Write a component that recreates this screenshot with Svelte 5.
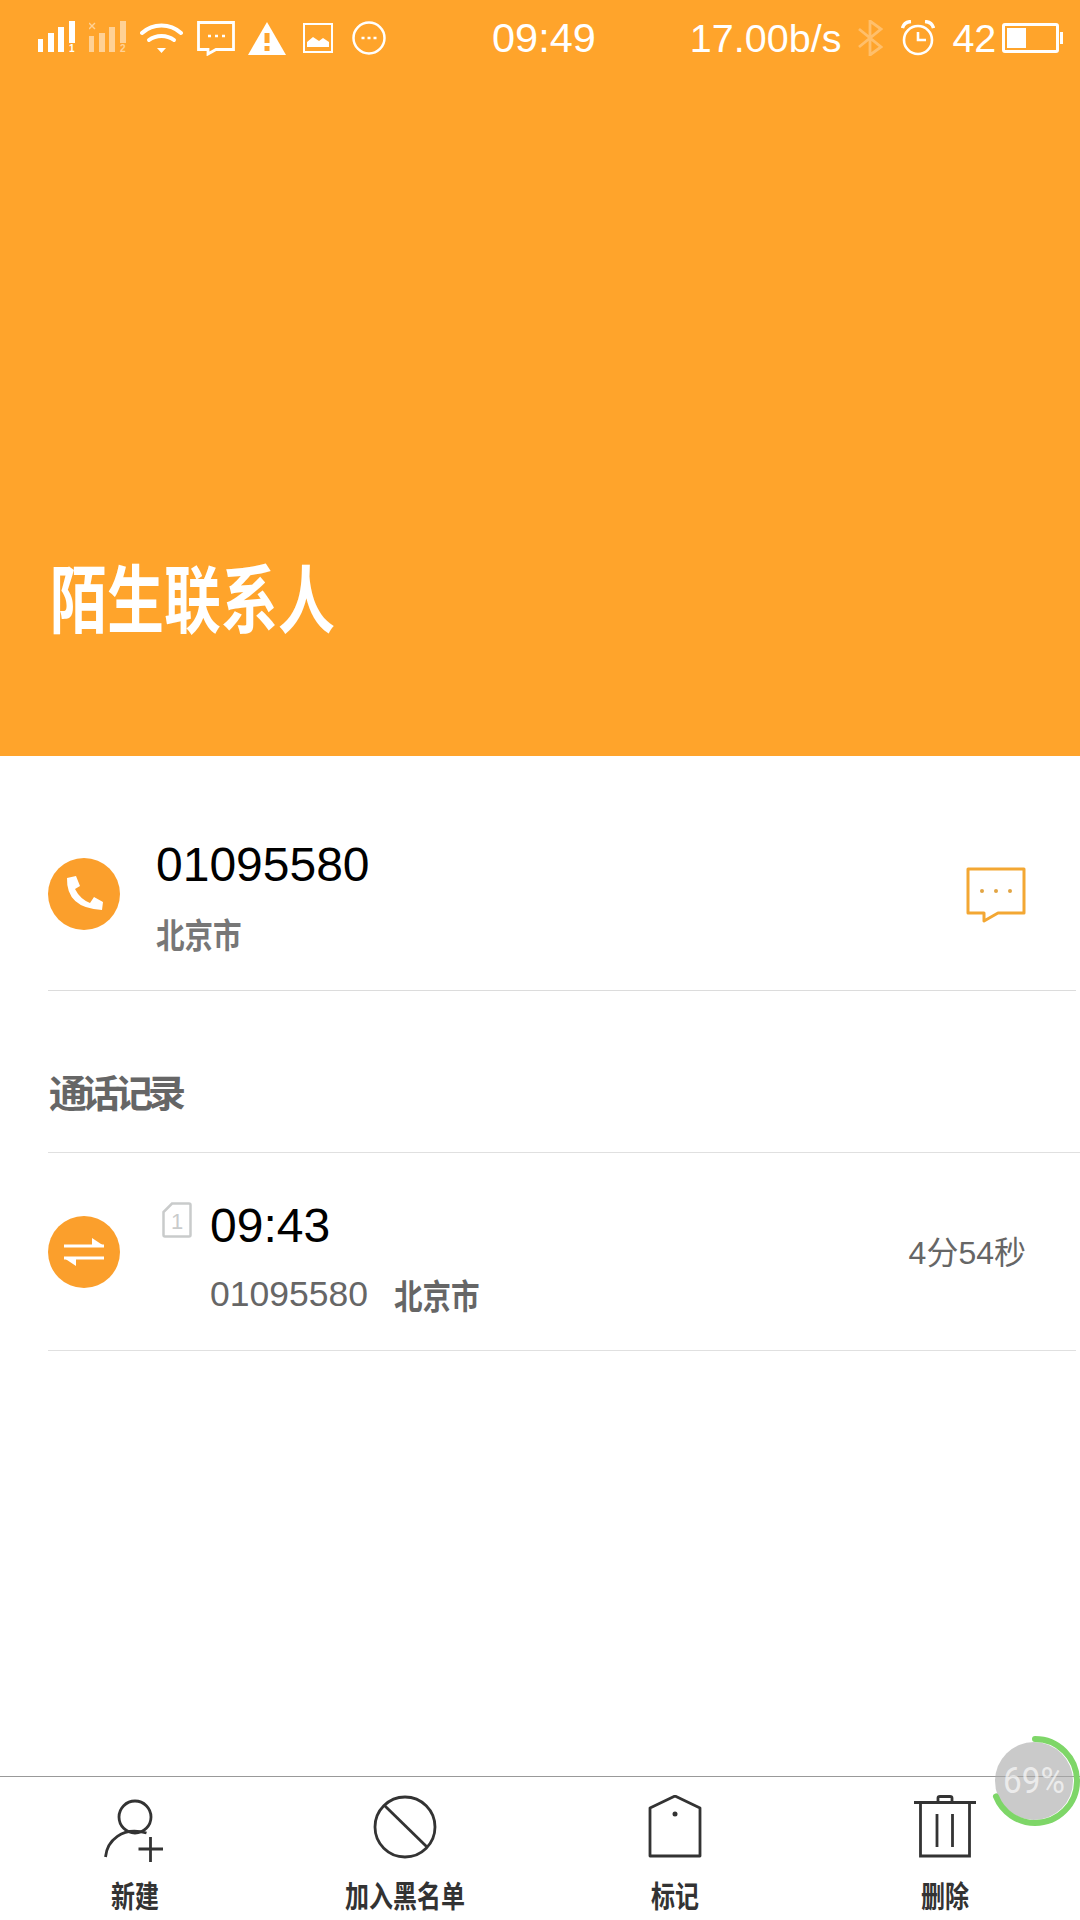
<script>
  const actions = [
    { label: '新建', icon: 'person' },
    { label: '加入黑名单', icon: 'block' },
    { label: '标记', icon: 'tag' },
    { label: '删除', icon: 'trash' }
  ];
</script>

<div class="page">
  <header class="hero">
    <div class="status">
      <svg class="s1" width="38" height="33" viewBox="0 0 38 33" fill="#fff">
        <rect x="0" y="18" width="5" height="13" /><rect x="10" y="12" width="6" height="19" />
        <rect x="20" y="6" width="6" height="25" /><rect x="31" y="0" width="6" height="22" />
        <text x="31" y="31" font-size="10" font-weight="700" font-family="Liberation Sans">1</text>
      </svg>
      <svg class="s2" width="38" height="33" viewBox="0 0 38 33" fill="#fff">
        <rect x="0" y="15" width="5" height="16" /><rect x="10" y="12" width="6" height="19" />
        <rect x="20" y="6" width="6" height="25" /><rect x="31" y="0" width="6" height="22" />
        <path d="M0 2l6 6M6 2l-6 6" stroke="#fff" stroke-width="1.4" />
        <text x="31" y="31" font-size="10" font-weight="700" font-family="Liberation Sans">2</text>
      </svg>
      <svg class="s3" width="43" height="32" viewBox="0 0 43 32" fill="none" stroke="#fff" stroke-width="4" stroke-linecap="round">
        <path d="M2 11C13 1 30 1 41 11" /><path d="M9 18c7-5.500 18-5.500 25 0" />
        <path d="M17 26h9l-4.500 5z" fill="#fff" stroke="none" />
      </svg>
      <svg class="s4" width="38" height="35" viewBox="0 0 38 35" fill="none" stroke="#fff" stroke-width="2.800">
        <path d="M1.500 1.500h35v27H19l-8 4.500v-4.500H1.500z" />
        <path d="M11 15h3M18 15h3M25 15h3" stroke-width="2.400" />
      </svg>
      <svg class="s5" width="38" height="33" viewBox="0 0 38 33">
        <path d="M19 0L38 33H0z" fill="#fff" />
        <rect x="16.500" y="11" width="5" height="10" fill="#ffa42b" /><rect x="16.500" y="24" width="5" height="5" fill="#ffa42b" />
      </svg>
      <svg class="s6" width="30" height="30" viewBox="0 0 30 30" fill="none">
        <rect x="1" y="1" width="28" height="28" stroke="#fff" stroke-width="2" />
        <path d="M4 24v-5l6-5 6 4 4-3 6 4v5z" fill="#fff" />
      </svg>
      <svg class="s7" width="34" height="34" viewBox="0 0 34 34" fill="none" stroke="#fff" stroke-width="2.500">
        <circle cx="17" cy="17" r="15.500" />
        <path d="M9.500 17h3M15.500 17h3M21.500 17h3" stroke-width="2.500" />
      </svg>
      <span class="clock">09:49</span>
      <span class="speed">17.00b/s</span>
      <svg class="bt" width="26" height="36" viewBox="0 0 26 36" fill="none" stroke="#fff" stroke-width="2.800" opacity="0.3">
        <path d="M2 9l22 18-11 8V1l11 8L2 27" />
      </svg>
      <svg class="alarm" width="34" height="36" viewBox="0 0 34 36" fill="none" stroke="#fff" stroke-width="2.600">
        <circle cx="17" cy="20" r="14" /><path d="M17 12v8h8" />
        <path d="M1.500 8Q3 2 10 1.500M32.500 8Q31 2 24 1.500" stroke-width="3.400" />
      </svg>
      <span class="level">42</span>
      <div class="battery"><div class="charge"></div></div>
    </div>
    <h1>陌生联系人</h1>
  </header>

  <section class="contact">
    <div class="dot">
      <svg width="40" height="38" viewBox="0 0 40 38" fill="#fff">
        <path d="M3 3L12 1l4 10-5 3q5 10 15 14l4-6 9 5-1 8Q2 33 3 3z" />
      </svg>
    </div>
    <div class="info">
      <div class="number">01095580</div>
      <div class="cjk place">北京市</div>
    </div>
    <svg class="chat" width="60" height="56" viewBox="0 0 60 56" fill="none" stroke="#f3a733" stroke-width="3">
      <path d="M2 2h56v44H32l-14 8v-8H2z" stroke-linejoin="round" />
      <circle cx="16" cy="24" r="2" fill="#e2a544" stroke="none" />
      <circle cx="30" cy="24" r="2" fill="#e2a544" stroke="none" />
      <circle cx="44" cy="24" r="2" fill="#e2a544" stroke="none" />
    </svg>
  </section>

  <h2 class="cjk">通话记录</h2>

  <section class="call">
    <div class="dot">
      <svg width="40" height="30" viewBox="0 0 40 30" fill="none" stroke="#fff" stroke-width="3">
        <path d="M0 9h40" /><path d="M28 9h12L28 1z" fill="#fff" stroke="none" />
        <path d="M0 21h40" /><path d="M12 21H0l12 8z" fill="#fff" stroke="none" />
      </svg>
    </div>
    <div class="info">
      <div class="timeline">
        <svg class="sim" width="30" height="36" viewBox="0 0 30 36" fill="none" stroke="#c9cbcb" stroke-width="2.500">
          <path d="M10 1.500h17a1.500 1.500 0 0 1 1.500 1.500v30a1.500 1.500 0 0 1-1.500 1.500H3A1.500 1.500 0 0 1 1.500 33V10z" />
          <text x="9" y="27" font-size="22" fill="#c9cbcb" stroke="none" font-family="Liberation Sans">1</text>
        </svg>
        <span class="number">09:43</span>
      </div>
      <div class="sub">
        <span class="tel">01095580</span>
        <span class="cjk place">北京市</span>
      </div>
    </div>
    <div class="length">4分54秒</div>
  </section>

  <nav class="actions">
    {#each actions as a}
      <div class="action">
        <svg width="70" height="68" viewBox="0 0 70 68" fill="none" stroke="#333" stroke-width="2.800">
          {#if a.icon === 'person'}
            <circle cx="33" cy="22" r="16" />
            <path d="M3.500 62C5 46 20 31 44.500 38" />
            <path d="M36.500 54H61M48.500 42v25" />
          {:else if a.icon === 'block'}
            <circle cx="35" cy="32" r="30" />
            <path d="M14 10l43 42" />
          {:else if a.icon === 'tag'}
            <path d="M10 13L35 1l25 12v48H10z" stroke-linejoin="round" />
            <circle cx="35" cy="19" r="2.500" fill="#333" stroke="none" />
          {:else}
            <path d="M4 7.500h62" stroke-width="3" />
            <path d="M28 7V3q0-1.500 2-1.500h10q2 0 2 1.500v4" />
            <path d="M10.500 8v53h49V8" />
            <path d="M27 19v33M42.500 19v33" />
          {/if}
        </svg>
        <span class="cjk">{a.label}</span>
      </div>
    {/each}
  </nav>

  <div class="memory">
    <svg width="90" height="90" viewBox="0 0 90 90" fill="none">
      <circle cx="44" cy="45" r="39" fill="#a9a9a9" fill-opacity="0.62" />
      <circle class="ring" cx="45" cy="45" r="42" pathLength="100" />
    </svg>
    <span>69%</span>
  </div>
</div>

<style>
  :global(body) {
    margin: 0;
    background: #fff;
  }

  .page {
    position: relative;
    display: flex;
    flex-direction: column;
    height: 1920px;
    overflow: hidden;
    font-family: 'Liberation Sans', 'Noto Sans CJK SC', sans-serif;
    color: #000;
  }

  .hero {
    display: flex;
    flex-direction: column;
    height: 756px;
    flex: none;
    background: #ffa42b;
    color: #fff;
  }

  .status {
    display: flex;
    align-items: center;
    height: 36px;
    padding: 20px 0 0 38px;
    font-size: 39.5px;
  }

  .status svg { flex: none; }
  .s1 { margin-top: -2px; }
  .s2 { margin: -2px 0 0 13px; opacity: 0.5; }
  .s3 { margin-left: 13px; }
  .s4 { margin-left: 14px; }
  .s5 { margin-left: 13px; }
  .s6 { margin-left: 17px; }
  .s7 { margin-left: 19px; }
  .clock { margin-left: 106px; font-size: 41.500px; }
  .speed { margin-left: 94px; }
  .bt { margin-left: 16px; }
  .alarm { margin-left: 18px; }
  .level { margin-left: 17px; }

  .battery {
    position: relative;
    box-sizing: border-box;
    width: 57px;
    height: 30px;
    margin-left: 6px;
    padding: 2px;
    border: 3px solid #fff;
    border-radius: 3px;
  }

  .battery::after {
    content: '';
    position: absolute;
    right: -7px;
    top: 6px;
    width: 3px;
    height: 12px;
    background: #fff;
  }

  .charge {
    width: 19px;
    height: 100%;
    background: #fff;
  }

  h1 {
    margin: auto 0 0 50px;
    padding: 0 0 122px;
    font-size: 74px;
    line-height: 78px;
    font-weight: 700;
    font-family: 'Noto Sans CJK SC', sans-serif;
    transform: scaleX(0.77);
    transform-origin: left;
  }

  .cjk {
    font-family: 'Noto Sans CJK SC', sans-serif;
    font-weight: 700;
  }

  .contact {
    display: flex;
    align-items: center;
    box-sizing: border-box;
    height: 235px;
    padding-top: 48px;
    margin: 0 4px 0 48px;
    border-bottom: 1px solid #dcdcdc;
    flex: none;
  }

  .contact .dot {
    margin-top: -6px;
  }

  .dot {
    display: flex;
    align-items: center;
    justify-content: center;
    flex: none;
    width: 72px;
    height: 72px;
    border-radius: 50%;
    background: #fb9f2c;
  }

  .info {
    flex: 1;
    margin-left: 36px;
  }

  .number {
    font-size: 48px;
    line-height: 56px;
  }

  .place {
    display: inline-block;
    font-size: 34px;
    line-height: 46px;
    color: #777;
    transform: scaleX(0.84);
    transform-origin: left;
  }

  .contact .place {
    margin-top: 18px;
  }

  .chat {
    margin: -4px 50px 0 0;
  }

  h2 {
    flex: none;
    margin: 0 0 0 48px;
    padding-left: 1px;
    height: 162px;
    box-sizing: border-box;
    border-bottom: 1px solid #e0e0e0;
    font-size: 38px;
    line-height: 200px;
    color: #666;
  }

  h2.cjk {
    letter-spacing: -5px;
  }

  .call {
    display: flex;
    align-items: center;
    box-sizing: border-box;
    flex: none;
    height: 198px;
    margin: 0 4px 0 48px;
    border-bottom: 1px solid #e0e0e0;
  }

  .call .info {
    margin-left: 42px;
    padding-top: 12px;
  }

  .timeline {
    display: flex;
    align-items: flex-start;
  }

  .sim {
    margin: 4px 18px 0 0;
  }

  .sub {
    display: flex;
    align-items: center;
    margin: 18px 0 0 48px;
  }

  .tel {
    font-size: 35.5px;
    color: #666;
  }

  .sub .place {
    margin-left: 26px;
    color: #666;
  }

  .length {
    margin: -4px 50px 0 0;
    font-size: 32px;
    color: #666;
  }

  .actions {
    display: grid;
    grid-template-columns: repeat(4, 1fr);
    margin-top: auto;
    height: 143px;
    border-top: 1px solid #999;
  }

  .action {
    display: flex;
    flex-direction: column;
    align-items: center;
    padding-top: 18px;
  }

  .action span {
    margin-top: 13px;
    font-size: 30px;
    line-height: 36px;
    color: #333;
    transform: scaleX(0.8);
  }

  .action:first-child svg {
    margin-left: 3px;
  }

  .memory {
    position: absolute;
    right: 0;
    top: 1736px;
    width: 90px;
    height: 90px;
  }

  .ring {
    stroke: #7ed668;
    stroke-width: 6;
    stroke-linecap: round;
    stroke-dasharray: 69 100;
    transform: rotate(-90deg);
    transform-origin: 45px 45px;
  }

  .memory span {
    position: absolute;
    left: 0;
    right: 2px;
    top: 26px;
    text-align: center;
    font-family: Roboto, sans-serif;
    font-size: 37px;
    line-height: 38px;
    color: rgba(255, 255, 255, 0.65);
    transform: scaleX(0.9);
  }
</style>
